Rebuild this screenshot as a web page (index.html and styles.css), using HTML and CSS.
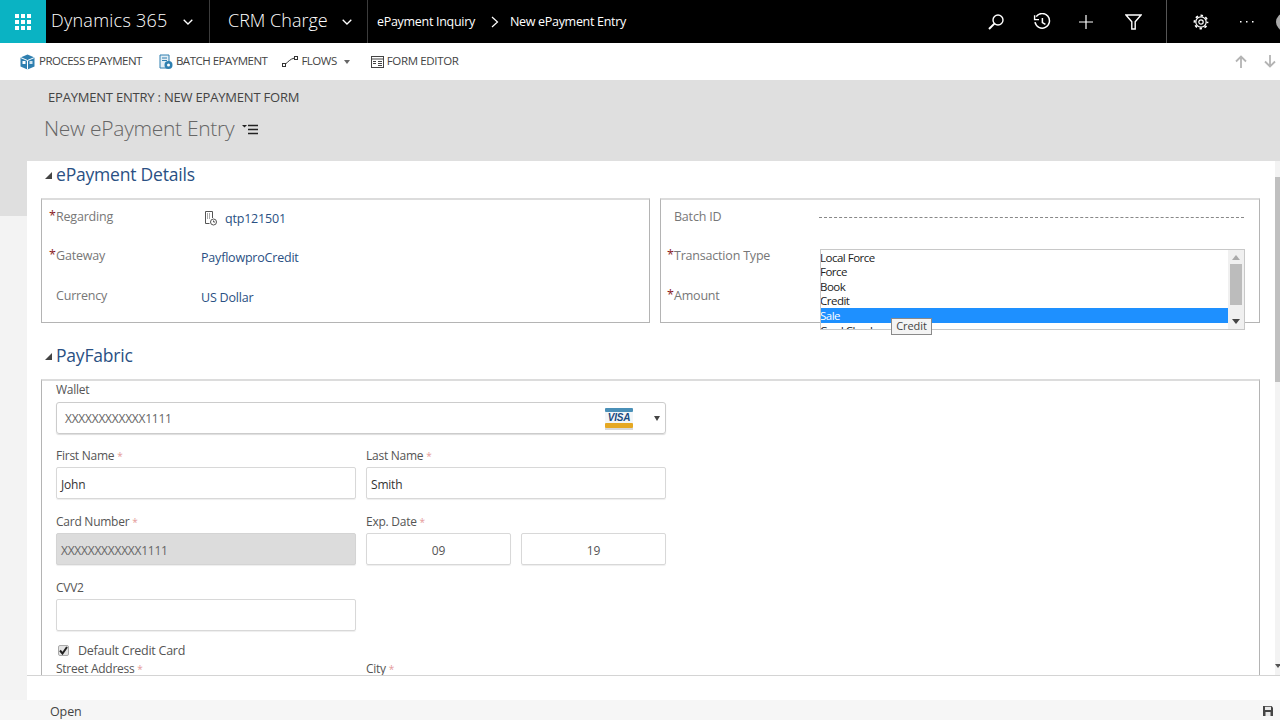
FILE: index.html
```html
<!DOCTYPE html>
<html lang="en">
<head>
<meta charset="utf-8">
<title>New ePayment Entry</title>
<link rel="stylesheet" href="styles.css">
</head>
<body>
<header class="topbar">
  <div class="waffle"><svg width="16" height="16" viewBox="0 0 16 16" fill="#fff"><rect x="0" y="0" width="4" height="4"/><rect x="6" y="0" width="4" height="4"/><rect x="12" y="0" width="4" height="4"/><rect x="0" y="6" width="4" height="4"/><rect x="6" y="6" width="4" height="4"/><rect x="12" y="6" width="4" height="4"/><rect x="0" y="12" width="4" height="4"/><rect x="6" y="12" width="4" height="4"/><rect x="12" y="12" width="4" height="4"/></svg></div>
  <div class="brand"><span class="brand-text">Dynamics 365</span><svg class="chev" width="10" height="6" viewBox="0 0 10 6"><path d="M.7.7 5 5 9.3.7" fill="none" stroke="#fff" stroke-width="1.3"/></svg></div>
  <div class="app"><span class="brand-text">CRM Charge</span><svg class="chev" width="10" height="6" viewBox="0 0 10 6"><path d="M.7.7 5 5 9.3.7" fill="none" stroke="#fff" stroke-width="1.3"/></svg></div>
  <nav class="crumbs"><span>ePayment Inquiry</span><svg class="crumb-sep" width="8" height="12" viewBox="0 0 8 12"><path d="M1 1l5.5 5L1 11" fill="none" stroke="#fff" stroke-width="1.2"/></svg><span>New ePayment Entry</span></nav>
  <div class="top-icons">
    <svg class="ti-search" width="18" height="18" viewBox="0 0 18 18" fill="none" stroke="#fff" stroke-width="1.4"><circle cx="11" cy="7" r="5"/><path d="M7.400 10.600 2 16" stroke-width="2"/></svg>
    <svg class="ti-hist" width="18" height="18" viewBox="0 0 18 18" fill="none" stroke="#fff" stroke-width="1.5"><path d="M3.200 3.600A7.300 7.300 0 1 1 2 9.200"/><path d="M1.600 2.200v4.400H6" stroke-width="1.400"/><path d="M9.400 5v4.600l3 1.800"/></svg>
    <svg class="ti-plus" width="16" height="16" viewBox="0 0 16 16" stroke="#fff" stroke-width="1.200"><path d="M8 1v14M1 8h14"/></svg>
    <svg class="ti-filter" width="17" height="16" viewBox="0 0 17 16" fill="none" stroke="#fff" stroke-width="1.400"><path d="M1 1h15l-5.800 6.800V15H6.800V7.800z"/></svg>
    <span class="top-div"></span>
    <svg class="ti-gear" width="16" height="16" viewBox="0 0 16 16" fill="none" stroke="#fff"><circle cx="8" cy="8" r="2.200" stroke-width="1.200"/><circle cx="8" cy="8" r="5.200" stroke-width="1.200"/><circle cx="8" cy="8" r="6.500" stroke-width="1.800" stroke-dasharray="2.500 2.605" stroke-dashoffset="1.250"/></svg>
    <svg class="ti-more" width="14" height="3" viewBox="0 0 14 3" fill="#fff"><rect x="0" y="1" width="1.500" height="1.500"/><rect x="6" y="1" width="1.500" height="1.500"/><rect x="12" y="1" width="1.500" height="1.500"/></svg>
    <span class="avatar"></span>
  </div>
</header>

<div class="cmdbar">
  <div class="cmd cmd-process"><svg width="15" height="16" viewBox="0 0 15 16"><path d="M7.500.5 14.500 3.500v9l-7 3-7-3v-9z" fill="#2e7fb0"/><path d="M.5 3.500l7 3 7-3M7.500 6.500v9" fill="none" stroke="#fff"/><rect x="2.500" y="7" width="3" height="3" fill="#fff"/><rect x="9.500" y="7" width="3" height="3" fill="#cfe3ef"/></svg><span>PROCESS EPAYMENT</span></div>
  <div class="cmd cmd-batch"><svg width="14" height="16" viewBox="0 0 14 16"><path d="M1 1h9v13H1z" fill="#e3eef5" stroke="#2e7fb0"/><path d="M3 4h5M3 6.500h5" stroke="#2e7fb0"/><circle cx="9.500" cy="11" r="4" fill="#2e7fb0"/><circle cx="9.500" cy="11" r="1.500" fill="#fff"/></svg><span>BATCH EPAYMENT</span></div>
  <div class="cmd cmd-flows"><svg width="16" height="11" viewBox="0 0 16 11" fill="none" stroke="#333"><rect x=".5" y="7.500" width="3" height="3"/><rect x="12.500" y=".5" width="3" height="3"/><path d="M3.500 8C6 6 8 3 12.500 2"/></svg><span>FLOWS</span><i class="caret"></i></div>
  <div class="cmd cmd-form"><svg width="13" height="12" viewBox="0 0 13 12" fill="none" stroke="#444"><rect x=".5" y=".5" width="12" height="11"/><path d="M.5 3h12M2 5.500h3M7 5.500h4M2 7.500h3M7 7.500h4M7 9.500h4"/></svg><span>FORM EDITOR</span></div>
  <div class="nav-arrows">
    <svg width="12" height="13" viewBox="0 0 12 13" fill="none" stroke="#b4b4b4" stroke-width="1.800"><path d="M6 13V2M1 6.500 6 1.500l5 5"/></svg>
    <svg width="12" height="13" viewBox="0 0 12 13" fill="none" stroke="#b4b4b4" stroke-width="1.800"><path d="M6 0v11M1 6.500l5 5 5-5"/></svg>
  </div>
</div>

<div class="pagehead">
  <div class="crumbline">EPAYMENT ENTRY : NEW EPAYMENT FORM</div>
  <div class="titleline"><h1>New ePayment Entry</h1><svg width="17" height="11" viewBox="0 0 17 11"><path d="M0 1h5L2.500 3.500z" fill="#222"/><path d="M6 1.500h10M6 5.500h10M6 9.500h10" stroke="#222" stroke-width="1.500"/></svg></div>
</div>

<div class="workspace">
  <aside class="gutter"><div class="gutter-top"></div></aside>
  <div class="sheet">
    <main class="form">
      <h2 class="section-title"><i class="tri"></i>ePayment Details</h2>
      <div class="two-col">
        <section class="box box-left">
          <div class="row"><label class="lbl"><b>*</b>Regarding</label><div class="val val-reg"><svg width="13" height="15" viewBox="0 0 13 15" fill="none" stroke="#555"><path d="M8.500 7V.5h-7v12h4"/><path d="M3 3h1M5 3h1M3 5h1M5 5h1M3 7h1M5 7h1"/><circle cx="9.500" cy="11" r="3"/><path d="M9.500 9.500V11H11"/></svg><a>qtp121501</a></div></div>
          <div class="row"><label class="lbl"><b>*</b>Gateway</label><div class="val"><a>PayflowproCredit</a></div></div>
          <div class="row"><label class="lbl">Currency</label><div class="val"><a>US Dollar</a></div></div>
        </section>
        <section class="box box-right">
          <div class="row"><label class="lbl">Batch ID</label><div class="val dashed"></div></div>
          <div class="row"><label class="lbl"><b>*</b>Transaction Type</label></div>
          <div class="row"><label class="lbl"><b>*</b>Amount</label></div>
          <div class="listbox">
            <div class="opts">
              <div class="opt">Local Force</div>
              <div class="opt">Force</div>
              <div class="opt">Book</div>
              <div class="opt">Credit</div>
              <div class="opt sel">Sale</div>
              <div class="opt">Card Check</div>
            </div>
            <div class="lb-scroll"><i class="up"></i><span class="lb-thumb"></span><i class="down"></i></div>
          </div>
          <div class="tooltip">Credit</div>
        </section>
      </div>

      <h2 class="section-title second"><i class="tri"></i>PayFabric</h2>
      <section class="box pay">
        <div class="f-label first">Wallet</div>
        <div class="wallet">
          <span>XXXXXXXXXXXX1111</span>
          <svg class="visa" width="30" height="22" viewBox="0 0 30 22"><rect x="1" y="19" width="28" height="3" fill="#d8d8d8"/><rect width="28" height="20" x="1" y="0" rx="1.500" fill="#f2f6f8"/><rect x="1" y="0" width="28" height="4" rx="1" fill="#4a90b8"/><rect x="1" y="15" width="28" height="5" rx="1" fill="#e5a823"/><text x="15" y="12.500" class="visa-text" text-anchor="middle">VISA</text></svg>
          <i class="w-caret"></i>
        </div>
        <div class="pair">
          <div class="cell"><div class="f-label">First Name <em>*</em></div><div class="inp">John</div></div>
          <div class="cell"><div class="f-label">Last Name <em>*</em></div><div class="inp">Smith</div></div>
        </div>
        <div class="pair">
          <div class="cell"><div class="f-label">Card Number <em>*</em></div><div class="inp disabled">XXXXXXXXXXXX1111</div></div>
          <div class="cell"><div class="f-label">Exp. Date <em>*</em></div><div class="exp"><div class="inp center">09</div><div class="inp center">19</div></div></div>
        </div>
        <div class="pair">
          <div class="cell"><div class="f-label">CVV2</div><div class="inp"></div></div>
        </div>
        <div class="check"><span class="cb"><svg width="9" height="9" viewBox="0 0 9 9"><path d="M1 4.500 3.500 7.500 8 1" fill="none" stroke="#222" stroke-width="2"/></svg></span>Default Credit Card</div>
        <div class="pair last">
          <div class="cell"><div class="f-label">Street Address <em>*</em></div></div>
          <div class="cell"><div class="f-label">City <em>*</em></div></div>
        </div>
      </section>
    </main>
    <div class="vscroll"><i class="vs-up"></i><span class="vs-thumb"></span><i class="vs-down"></i></div>
  </div>
</div>

<div class="spacer-row"><div class="gutter-low"></div><div class="spacer-white"></div></div>
<footer class="footer">
  <span class="open">Open</span>
  <svg class="save" width="10" height="10" viewBox="0 0 10 10"><path d="M0 0h8.500L10 1.500V10H0z" fill="#444"/><rect x="2" y="0.800" width="6" height="3.200" fill="#e8e8e8"/><rect x="2.500" y="6" width="5" height="4" fill="#e8e8e8"/></svg>
</footer>
</body>
</html>
```
FILE: styles.css
```css
* { box-sizing: border-box; }
html, body { margin: 0; height: 720px; overflow: hidden; }
body { font-family: "Open Sans", "Noto Sans", sans-serif; font-size: 12px; color: #444; background: #fff; display: flex; flex-direction: column; }
h1, h2 { margin: 0; font-weight: 400; }

.topbar { height: 43px; background: #000; color: #fff; display: flex; align-items: stretch; flex: none; }
.waffle { width: 46px; background: #0ab3c3; display: flex; align-items: center; justify-content: center; }
.brand { width: 164px; display: flex; align-items: center; padding-left: 5px; border-right: 1px solid #3c3c3c; }
.app { width: 158px; display: flex; align-items: center; padding-left: 18px; border-right: 1px solid #3c3c3c; }
.brand-text { font-size: 18px; font-weight: 300; letter-spacing: 0; white-space: nowrap; margin-top: -4px; }
.brand .brand-text { letter-spacing: .25px; }
.brand .chev { margin-left: 15px; }
.app .chev { margin-left: 14px; }
.crumbs { display: flex; align-items: center; padding-left: 9px; font-size: 12.500px; letter-spacing: -.3px; white-space: nowrap; }
.crumbs span { margin-top: -1px; }
.crumb-sep { margin: 0 11px 0 16px; }
.top-icons { margin-left: auto; display: flex; align-items: center; overflow: hidden; height: 43px; }
.top-icons svg { flex: none; }
.ti-hist { margin-left: 28px; }
.ti-plus { margin-left: 27px; }
.ti-filter { margin-left: 31px; }
.top-div { width: 1px; height: 43px; background: #555; margin-left: 24px; }
.ti-gear { margin-left: 26px; }
.ti-more { margin-left: 31px; }
.avatar { width: 18px; height: 18px; border-radius: 50%; background: #aaa; margin-left: 22px; margin-right: -14px; flex: none; }

.cmdbar { height: 37px; background: #fff; display: flex; align-items: center; flex: none; padding-left: 20px; font-size: 11.500px; color: #444; letter-spacing: -.5px; white-space: nowrap; }
.cmd { display: flex; align-items: center; }
.cmd svg { flex: none; }
.cmd span { line-height: 14px; margin-top: -1px; }
.cmd-process span { margin-left: 4px; }
.cmd-batch { margin-left: 17px; }
.cmd-batch span { margin-left: 3px; }
.cmd-flows { margin-left: 15px; }
.cmd-flows span { margin-left: 3px; }
.caret { width: 0; height: 0; border: 3px solid transparent; border-top: 4px solid #666; border-bottom: 0; margin-left: 7px; }
.cmd-form { margin-left: 21px; }
.cmd-form span { margin-left: 3px; letter-spacing: -.35px; }
.nav-arrows { margin-left: auto; display: flex; gap: 17px; padding-right: 4px; }

.pagehead { height: 81px; background: #dfdfdf; flex: none; padding-left: 44px; }
.crumbline { font-size: 13px; color: #444; padding: 8px 0 0 4px; letter-spacing: -.2px; line-height: 18px; }
.titleline { display: flex; align-items: center; margin-top: 7px; }
.titleline h1 { font-size: 21px; font-weight: 300; color: #666; letter-spacing: -.3px; line-height: 30px; }
.titleline svg { margin-left: 8px; margin-top: 3px; }

.workspace { flex: none; height: 515px; display: flex; background: #f3f3f3; }
.gutter { width: 27px; flex: none; }
.gutter-top { height: 55px; background: #dfdfdf; }
.sheet { flex: 1; background: #fff; display: flex; border-bottom: 1px solid #d4d4d4; min-width: 0; overflow: hidden; }
.form { flex: 1; padding: 0 15px 0 14px; min-width: 0; overflow: hidden; }
.section-title { font-size: 17.500px; color: #2a5083; letter-spacing: -.2px; line-height: 24px; display: flex; align-items: center; padding-left: 4px; margin-top: 1px; height: 24px; }
.section-title.second { margin-top: 20px; height: 24px; }
.tri { width: 0; height: 0; border-style: solid; border-width: 0 0 7px 7px; border-color: transparent transparent #444 transparent; margin-right: 4px; margin-top: 2px; }

.two-col { display: flex; gap: 10px; margin-top: 12px; }
.box { border: 1px solid #b4b4b4; border-top: 2px solid #dcdcdc; position: relative; }
.box-left { width: 609px; height: 125px; padding-top: 6.700px; }
.box-right { width: 600px; height: 125px; padding-top: 6.700px; }
.row { display: flex; height: 39.500px; font-size: 12.500px; letter-spacing: -.2px; }
.lbl { width: 159px; padding-left: 14px; color: #777; position: relative; line-height: 19px; flex: none; }
.lbl b { position: absolute; left: 7px; top: -1px; color: #8a1a1a; font-weight: 400; }
.box-right .lbl { width: 158px; padding-left: 13px; }
.box-right .lbl b { left: 6px; }
.val { line-height: 19px; padding-top: 2.300px; }
.val a { color: #2a5083; }
.val-reg { display: flex; align-items: center; height: 21px; padding-left: 3px; gap: 8px; }
.val-reg svg { flex: none; }
.dashed { width: 425px; height: 11px; border-bottom: 1px dashed #888; padding: 0; }

.listbox { position: absolute; left: 159px; top: 49px; width: 425px; height: 81px; background: #fff; border: 1px solid #c8c8c8; display: flex; font-size: 11.500px; color: #222; letter-spacing: -.5px; overflow: hidden; }
.opts { flex: 1; min-width: 0; margin: -.3px 0 0 -1px; }
.opt { height: 14.600px; line-height: 15px; }
.opt.sel { background: #1e90ff; color: #fff; }
.lb-scroll { width: 16px; flex: none; background: #f0f0f0; display: flex; flex-direction: column; align-items: center; }
.up, .down { width: 0; height: 0; border: 4px solid transparent; flex: none; }
.up { border-bottom: 5px solid #aaa; border-top: 0; margin-top: 5px; }
.down { border-top: 5px solid #444; border-bottom: 0; margin-top: auto; margin-bottom: 5px; }
.lb-thumb { width: 12px; height: 41px; background: #bcbcbc; margin-top: 4px; }
.tooltip { position: absolute; left: 230px; top: 118px; width: 41px; height: 17px; background: #f4f4f4; border: 1px solid #8a8a8a; font-size: 11px; text-align: center; line-height: 14px; color: #444; letter-spacing: -.1px; }

.pay { margin-top: 12px; height: 320px; border-bottom: 0; padding: 1px 0 0 14px; font-size: 12px; }
.f-label { color: #555; font-size: 12px; letter-spacing: -.25px; line-height: 16px; height: 16px; }
.f-label em { color: #e59a9a; font-style: normal; font-size: 10px; }
.wallet { width: 610px; height: 32px; margin-top: 4px; border: 1px solid #ccc; border-radius: 3px; box-shadow: 0 1px 1px #ddd; display: flex; align-items: center; padding-left: 8px; color: #666; letter-spacing: -.25px; }
.visa { margin-left: auto; flex: none; margin-right: 20px; margin-top: 2px; }
.visa-text { font: italic 700 10px "Liberation Sans", sans-serif; fill: #1a4a80; }
.w-caret { width: 0; height: 0; border: 3px solid transparent; border-top: 5px solid #444; border-bottom: 0; margin-right: 5px; }
.pair { display: flex; gap: 10px; margin-top: 15px; }
.wallet + .pair { margin-top: 14px; }
.cell { width: 300px; flex: none; }
.cell .f-label { margin-bottom: 3px; }
.inp { height: 32px; border: 1px solid #d8d8d8; border-radius: 2px; box-shadow: 0 1px 1px #eee; line-height: 33px; padding-left: 4px; color: #333; letter-spacing: -.2px; }
.inp.disabled { background: #dcdcdc; color: #666; border-color: #d4d4d4; letter-spacing: -.25px; }
.exp { display: flex; gap: 10px; }
.exp .inp { flex: 1; }
.inp.center { text-align: center; padding-left: 0; color: #555; }
.check { display: flex; align-items: center; margin-top: 11px; font-size: 12.500px; color: #555; height: 16px; letter-spacing: -.25px; }
.cb { width: 11px; height: 11px; background: #e4e4e4; border: 1px solid #aaa; border-radius: 2px; margin: 0 9px 0 2px; display: flex; align-items: center; justify-content: center; flex: none; }
.pair.last { margin-top: 3px; }

.vscroll { width: 5px; flex: none; background: #f3f3f3; display: flex; flex-direction: column; position: relative; }
.vs-up { height: 16px; flex: none; }
.vs-thumb { height: 205px; background: #c0c0c0; flex: none; }
.vs-down { width: 0; height: 0; border: 3px solid transparent; border-top: 4px solid #555; border-bottom: 0; margin-top: auto; margin-bottom: 7px; }

.spacer-row { height: 24px; display: flex; flex: none; }
.gutter-low { width: 27px; background: #f3f3f3; }
.spacer-white { flex: 1; background: #fff; }
.footer { height: 20px; flex: none; background: #f6f6f6; display: flex; align-items: center; padding: 0 7px 0 50px; font-size: 12.500px; color: #444; justify-content: space-between; }
.open { letter-spacing: -.1px; margin-top: 2px; }
.save { margin-top: 2px; }
```
